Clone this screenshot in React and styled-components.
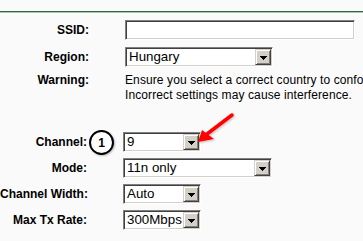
import React from "react";
import styled, { createGlobalStyle } from "styled-components";

const Global = createGlobalStyle`
  html, body { margin: 0; padding: 0; background: #fafafa; overflow: hidden; }
  body { font-family: "Liberation Sans", Arial, sans-serif; color: #000; }
`;

const Page = styled.div`
  position: relative;
  width: 363px;
  height: 241px;
  overflow: hidden;
`;

const Rule = styled.div`
  margin-top: 11px;
  height: 0;
  border-top: 1px solid #2b6a42;
  border-bottom: 1px solid #a7c7b2;
`;

const Section = styled.div`
  display: flex;
  flex-direction: column;
  padding-top: ${(p) => p.$pt}px;
  gap: ${(p) => p.$gap}px;
`;

const Row = styled.div`
  position: relative;
  display: flex;
  align-items: ${(p) => (p.$top ? "flex-start" : "center")};
  margin-top: ${(p) => p.$mt || 0}px;
`;

const Label = styled.div`
  width: ${(p) => p.$w}px;
  flex-shrink: 0;
  margin-right: 36px;
  text-align: right;
  white-space: nowrap;
  font-weight: bold;
  font-size: 12px;
  line-height: 15px;
`;

const Note = styled.div`
  font-size: 12px;
  line-height: 15px;
  letter-spacing: 0.1px;
  white-space: nowrap;
`;

const TextInput = styled.div`
  box-sizing: border-box;
  width: ${(p) => p.$w}px;
  height: 20px;
  background: #fff;
  border-style: solid;
  border-width: 1px;
  border-color: #808080 #ffffff #ffffff #808080;
  box-shadow: inset 1px 1px 0 #404040, inset -1px -1px 0 #d4d0c8;
`;

const SelectBox = styled.div`
  box-sizing: border-box;
  width: ${(p) => p.$w}px;
  height: 20px;
  display: flex;
  align-items: stretch;
  background: #fff;
  border-style: solid;
  border-width: 1px;
  border-color: #808080 #ffffff #ffffff #808080;
  box-shadow: inset 1px 1px 0 #404040, inset -1px -1px 0 #d4d0c8;
  padding: 1px;
`;

const SelectText = styled.span`
  flex: 1;
  padding-left: 2px;
  font-size: 13.33px;
  line-height: 16px;
  white-space: nowrap;
  overflow: hidden;
`;

const DropButton = styled.div`
  box-sizing: border-box;
  width: 16px;
  height: 16px;
  background: #d4d0c8;
  border-style: solid;
  border-width: 1px;
  border-color: #d4d0c8 #404040 #404040 #d4d0c8;
  box-shadow: inset 1px 1px 0 #ffffff, inset -1px -1px 0 #808080;
  display: flex;
  align-items: center;
  justify-content: center;
  padding-top: 1px;
`;

const Badge = styled.div`
  position: absolute;
  left: 89px;
  top: -2px;
  box-sizing: border-box;
  width: 25px;
  height: 25px;
  border-radius: 50%;
  border: 2px solid #000;
  background: #fff;
  display: flex;
  align-items: center;
  justify-content: center;
  font-weight: bold;
  font-size: 12px;
  box-shadow: 1px 1px 2px rgba(0, 0, 0, 0.25);
`;

const Overlay = styled.svg`
  position: absolute;
  left: 0;
  top: 0;
  pointer-events: none;
`;

const Arrow = () => (
  <svg width="7" height="4" viewBox="0 0 7 4" shapeRendering="crispEdges">
    <polygon points="0,0 7,0 3.5,4" fill="#000" />
  </svg>
);

const Select = ({ w, value }) => (
  <SelectBox $w={w}>
    <SelectText>{value}</SelectText>
    <DropButton>
      <Arrow />
    </DropButton>
  </SelectBox>
);

export default function App() {
  return (
    <Page>
      <Global />
      <Rule />
      <Section $pt={7} $gap={7}>
        <Row>
          <Label $w={89}>SSID:</Label>
          <TextInput $w={230} />
        </Row>
        <Row>
          <Label $w={89}>Region:</Label>
          <Select w={148} value="Hungary" />
        </Row>
        <Row $top $mt={-1}>
          <Label $w={89}>Warning:</Label>
          <Note>
            Ensure you select a correct country to conform local law.
            <br />
            Incorrect settings may cause interference.
          </Note>
        </Row>
      </Section>
      <Section $pt={29} $gap={6}>
        <Row>
          <Label $w={87}>Channel:</Label>
          <Badge>1</Badge>
          <Select w={78} value="9" />
        </Row>
        <Row>
          <Label $w={87}>Mode:</Label>
          <Select w={149} value="11n only" />
        </Row>
        <Row>
          <Label $w={87}>Channel Width:</Label>
          <Select w={78} value="Auto" />
        </Row>
        <Row>
          <Label $w={87}>Max Tx Rate:</Label>
          <Select w={78} value="300Mbps" />
        </Row>
      </Section>
      <Overlay width="363" height="241" viewBox="0 0 363 241">
        <defs>
          <filter id="soft" x="-20%" y="-20%" width="140%" height="140%">
            <feDropShadow dx="1" dy="1" stdDeviation="0.8" floodColor="#000" floodOpacity="0.25" />
          </filter>
        </defs>
        <g filter="url(#soft)">
          <line x1="207" y1="134" x2="232" y2="115" stroke="#ff0000" strokeWidth="3.5" strokeLinecap="round" />
          <polygon points="198,142 202,130 214,139" fill="#ff0000" />
        </g>
      </Overlay>
    </Page>
  );
}
